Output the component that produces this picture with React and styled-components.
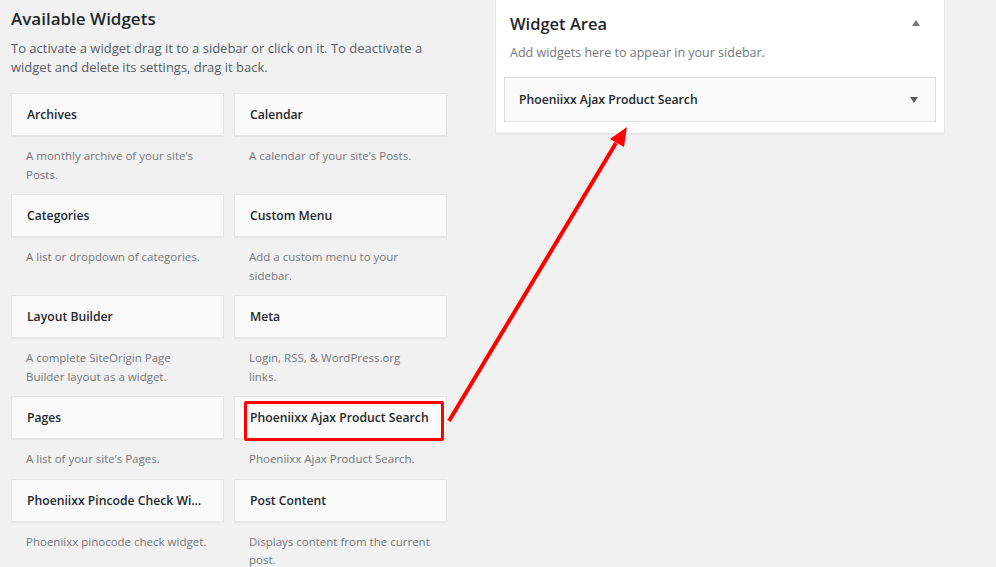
import React from 'react';
import styled, { createGlobalStyle } from 'styled-components';

const widgets = [
  ['Archives', "A monthly archive of your site’s Posts."],
  ['Calendar', 'A calendar of your site’s Posts.'],
  ['Categories', 'A list or dropdown of categories.'],
  ['Custom Menu', 'Add a custom menu to your sidebar.'],
  ['Layout Builder', 'A complete SiteOrigin Page Builder layout as a widget.'],
  ['Meta', 'Login, RSS, & WordPress.org\nlinks.'],
  ['Pages', 'A list of your site’s Pages.'],
  ['Phoeniixx Ajax Product Search', 'Phoeniixx Ajax Product Search.', true],
  ['Phoeniixx Pincode Check Widget', 'Phoeniixx pinocode check widget.'],
  ['Post Content', 'Displays content from the current post.'],
];

export default function App() {
  return (
    <>
      <GlobalStyle />
      <Page>
        <Available>
          <Heading>Available Widgets</Heading>
          <Intro>
            To activate a widget drag it to a sidebar or click on it. To deactivate a widget and
            delete its settings, drag it back.
          </Intro>
          <WidgetGrid>
            {widgets.map(([title, desc, marked]) => (
              <WidgetItem key={title}>
                <WidgetCard>
                  <WidgetTitle>{title}</WidgetTitle>
                  {marked && <Highlight />}
                </WidgetCard>
                <WidgetDesc>{desc}</WidgetDesc>
              </WidgetItem>
            ))}
          </WidgetGrid>
        </Available>

        <Sidebar>
          <SidebarHead>
            <SidebarTitle>Widget Area</SidebarTitle>
            <Caret $up />
          </SidebarHead>
          <SidebarDesc>Add widgets here to appear in your sidebar.</SidebarDesc>
          <PlacedWidget>
            <PlacedTitle>Phoeniixx Ajax Product Search</PlacedTitle>
            <Caret />
          </PlacedWidget>
        </Sidebar>

        <Arrow width="996" height="567" viewBox="0 0 996 567">
          <line x1="449" y1="421" x2="616" y2="143" stroke="#ff0000" strokeWidth="4" />
          <polygon points="627,127 610,139 624,147" fill="#ff0000" />
        </Arrow>
      </Page>
    </>
  );
}

const GlobalStyle = createGlobalStyle`
  body {
    margin: 0;
    background: #f1f1f1;
    font-family: "Open Sans", "Noto Sans", sans-serif;
    color: #23282d;
  }
`;

const Page = styled.div`
  position: relative;
  display: flex;
  align-items: flex-start;
  gap: 47px;
  padding-left: 11px;
  height: 567px;
  overflow: hidden;
`;

const Available = styled.div`
  width: 437px;
  padding-top: 7px;
`;

const Heading = styled.h2`
  margin: 0;
  font-size: 17px;
  font-weight: 600;
  line-height: 24px;
  color: #23282d;
`;

const Intro = styled.p`
  margin: 8px 0 0;
  font-size: 13px;
  line-height: 19px;
  color: #555d66;
`;

const WidgetGrid = styled.div`
  display: grid;
  grid-template-columns: 213px 213px;
  column-gap: 10px;
  margin-top: 16px;
`;

const WidgetItem = styled.div`
  display: flex;
  flex-direction: column;
`;

const WidgetCard = styled.div`
  position: relative;
  height: 43px;
  box-sizing: border-box;
  background: #fafafa;
  border: 1px solid #e5e5e5;
  box-shadow: 0 1px 1px rgba(0, 0, 0, 0.04);
  padding: 0 15px;
  display: flex;
  align-items: center;
`;

const WidgetTitle = styled.h3`
  margin: 0;
  font-size: 12.2px;
  font-weight: 600;
  color: #23282d;
  white-space: nowrap;
  overflow: hidden;
  text-overflow: ellipsis;
`;

const Highlight = styled.span`
  position: absolute;
  left: 9px;
  top: 4px;
  width: 200px;
  height: 40px;
  box-sizing: border-box;
  border: 3px solid #ff0000;
  border-radius: 2px;
`;

const WidgetDesc = styled.p`
  margin: 0;
  padding: 11px 15px 10px 15px;
  font-size: 11.5px;
  line-height: 18.5px;
  color: #72777c;
  white-space: pre-line;
`;

const Sidebar = styled.div`
  width: 450px;
  box-sizing: border-box;
  background: #fff;
  border: 1px solid #e5e5e5;
  border-top: none;
  box-shadow: 0 1px 1px rgba(0, 0, 0, 0.04);
  padding: 0 8px 11px;
`;

const SidebarHead = styled.div`
  display: flex;
  align-items: center;
  justify-content: space-between;
  padding: 10px 16px 0 6px;
  height: 26px;
`;

const SidebarTitle = styled.h2`
  margin: 0;
  font-size: 16.5px;
  font-weight: 600;
  color: #23282d;
`;

const Caret = styled.span`
  width: 0;
  height: 0;
  border-left: 4px solid transparent;
  border-right: 4px solid transparent;
  ${p => (p.$up ? 'border-bottom: 6px solid #72777c;' : 'border-top: 6px solid #555d66;')}
`;

const SidebarDesc = styled.p`
  margin: 8px 0 0 6px;
  font-size: 12.5px;
  line-height: 18px;
  color: #72777c;
`;

const PlacedWidget = styled.div`
  margin-top: 15px;
  height: 45px;
  box-sizing: border-box;
  background: #fafafa;
  border: 1px solid #dfdfdf;
  display: flex;
  align-items: center;
  justify-content: space-between;
  padding: 0 17px 0 14px;
`;

const PlacedTitle = styled.h3`
  margin: 0;
  font-size: 12.2px;
  font-weight: 600;
  color: #23282d;
`;

const Arrow = styled.svg`
  position: absolute;
  left: 0;
  top: 0;
  pointer-events: none;
`;
